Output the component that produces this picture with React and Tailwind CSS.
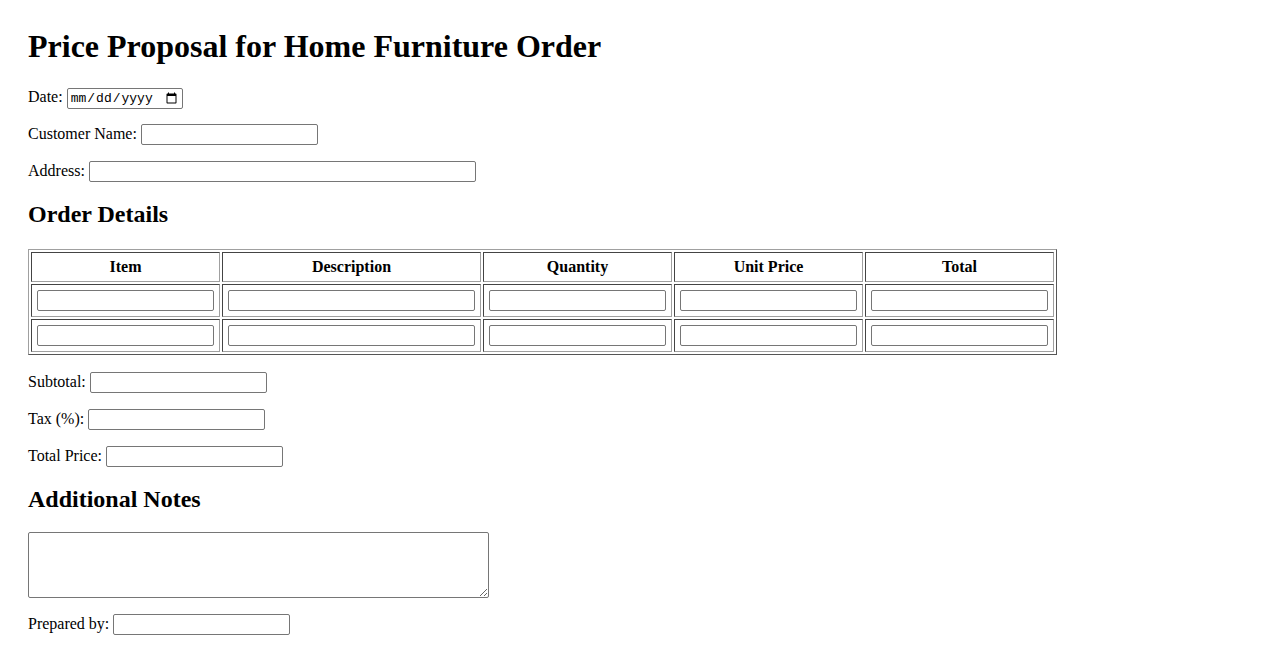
import React from "react";

const inputCls =
  "h-[21px] border border-[#767676] rounded-[2px] bg-white px-[2px] text-[13.33px] align-baseline";

function Field({ label, width = "w-[177px]", type = "text" }) {
  return (
    <p className="my-4 h-[21px] leading-[21px]">
      <label>{label}</label>{" "}
      <input type={type} className={`${inputCls} ${width}`} />
    </p>
  );
}

const columns = [
  { name: "Item", w: "w-[177px]" },
  { name: "Description", w: "w-[247px]" },
  { name: "Quantity", w: "w-[177px]" },
  { name: "Unit Price", w: "w-[177px]" },
  { name: "Total", w: "w-[177px]" },
];

function App() {
  return (
    <div className="min-h-screen bg-white px-[28px] pt-[28px] pb-4 font-['Liberation_Serif',serif] text-base text-black">
      <h1 className="mb-[21.44px] text-[32px] font-bold leading-[37px]">
        Price Proposal for Home Furniture Order
      </h1>

      <p className="my-4 h-[21px] leading-[21px]">
        <label>Date:</label>{" "}
        <input
          type="date"
          className="h-[21px] w-[116px] border border-[#767676] rounded-[2px] bg-white px-[2px] align-baseline font-['Liberation_Mono',monospace] text-[13px]"
        />
      </p>
      <Field label="Customer Name:" />
      <Field label="Address:" width="w-[387px]" />

      <h2 className="my-[19.92px] text-2xl font-bold leading-[27.6px]">Order Details</h2>

      <table className="border-separate border-spacing-[2px] border border-t-[#a0a0a0] border-l-[#a0a0a0] border-r-[#555555] border-b-[#555555]">
        <thead>
          <tr>
            {columns.map((c) => (
              <th
                key={c.name}
                className="border border-t-[#444444] border-l-[#444444] border-r-[#a0a0a0] border-b-[#a0a0a0] p-[5px] text-center font-bold leading-[18px]"
              >
                {c.name}
              </th>
            ))}
          </tr>
        </thead>
        <tbody>
          {[0, 1].map((r) => (
            <tr key={r}>
              {columns.map((c) => (
                <td
                  key={c.name}
                  className="border border-t-[#444444] border-l-[#444444] border-r-[#a0a0a0] border-b-[#a0a0a0] px-[5px] pt-[5px] pb-[5px]"
                >
                  <input type="text" className={`block ${inputCls} ${c.w}`} />
                </td>
              ))}
            </tr>
          ))}
        </tbody>
      </table>

      <Field label="Subtotal:" />
      <Field label="Tax (%):" />
      <Field label="Total Price:" />

      <h2 className="mt-[19.92px] mb-[18.5px] text-2xl font-bold leading-[27.6px]">Additional Notes</h2>

      <textarea className="block h-[66px] w-[461px] resize border border-[#767676] rounded-[2px] bg-white p-[2px] font-['Liberation_Mono',monospace] text-[13px]" />

      <p className="mt-[15px] h-[21px] leading-[21px]">
        <label>Prepared by:</label>{" "}
        <input type="text" className={`${inputCls} w-[177px]`} />
      </p>
    </div>
  );
}

export default App;
